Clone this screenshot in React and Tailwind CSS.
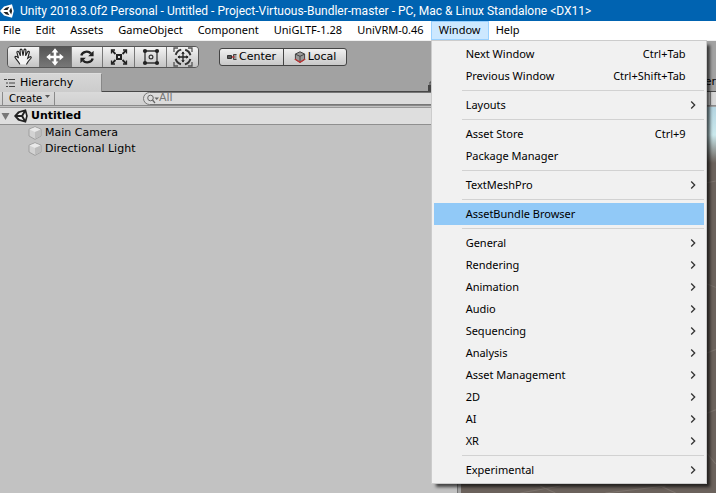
import React from "react";

const MENU_GROUPS = [
  [
    { label: "Next Window", keys: "Ctrl+Tab" },
    { label: "Previous Window", keys: "Ctrl+Shift+Tab" },
  ],
  [{ label: "Layouts", sub: true }],
  [{ label: "Asset Store", keys: "Ctrl+9" }, { label: "Package Manager" }],
  [{ label: "TextMeshPro", sub: true }],
  [{ label: "AssetBundle Browser", active: true }],
  [
    { label: "General", sub: true },
    { label: "Rendering", sub: true },
    { label: "Animation", sub: true },
    { label: "Audio", sub: true },
    { label: "Sequencing", sub: true },
    { label: "Analysis", sub: true },
    { label: "Asset Management", sub: true },
    { label: "2D", sub: true },
    { label: "AI", sub: true },
    { label: "XR", sub: true },
  ],
  [{ label: "Experimental", sub: true }],
];

function UnityLogo({ className, fill, edge }) {
  return (
    <svg className={className} viewBox="0 0 14 14" aria-hidden="true">
      <path d="M0 7 4 2.5 12 .2 13.8 7 12 13.8 4 11.500Z" fill={fill} />
      <path
        d="M3.4 6 5.8 3.700 9.4 2.700 7.500 6ZM3.4 8H7.500L9.4 11.300 5.800 10.300ZM9.2 7 11.2 3.600 12.1 7 11.2 10.400Z"
        fill={edge}
      />
    </svg>
  );
}

function HandIcon() {
  return (
    <svg className="h-[18px] w-[18px]" viewBox="0 0 16 16" aria-hidden="true">
      <path
        d="M5.2 14.5C4.6 12.4 1.3 9.6.8 8.1c.6-1.2 1.9-.6 3.2 1L2.6 4c-.1-1.3 1.3-1.5 1.700-.3L5.7 7 5.400 2c.1-1.3 1.6-1.300 1.800 0L8 6.7 8.900 1.800c.3-1.2 1.700-1 1.700.2L10.300 7l1.700-3.500c.6-1 1.900-.5 1.600.6L12.2 9.200 13.900 7.900c1-.5 1.800.3 1.100 1.200L12.6 12l-1.600 2.700"
        fill="#f5f5f5"
        stroke="#222"
        strokeWidth="1"
      />
    </svg>
  );
}

function MoveIcon() {
  return (
    <svg className="h-[18px] w-[18px]" viewBox="0 0 18 18" aria-hidden="true">
      <path
        d="M9 .3 12.4 4.4H10.3V7.7H13.6V5.6L17.7 9 13.6 12.4V10.3H10.3V13.6H12.4L9 17.7 5.6 13.6H7.7V10.3H4.4V12.4L.3 9 4.4 5.6V7.7H7.7V4.4H5.6Z"
        fill="#fff"
      />
    </svg>
  );
}

function RotateIcon() {
  return (
    <svg className="h-4 w-4" viewBox="0 0 16 16" aria-hidden="true">
      <path d="M2.3 6.5C3.4 2.4 9.2 1.3 12 4.6M13.7 9.5C12.6 13.6 6.8 14.7 4 11.4" fill="none" stroke="#222" strokeWidth="2.3" />
      <path d="M14.6 1.8V7.2H9.2ZM1.4 14.2V8.8H6.8Z" fill="#222" />
    </svg>
  );
}

function ScaleIcon() {
  return (
    <svg className="h-[18px] w-[18px]" viewBox="0 0 18 18" aria-hidden="true">
      <path d="M7 7h4v4H7z" fill="none" stroke="#222" strokeWidth="2" />
      <path d="M2 2.500l3.500 3.500M16 2.500l-3.500 3.500M2 15.500l3.500-3.500M16 15.500l-3.500-3.500" stroke="#222" strokeWidth="1.800" />
      <path d="M1.500 5.500V2H5M13 2h3.500v3.500M1.500 12.500V16H5M13 16h3.500v-3.500" fill="none" stroke="#222" strokeWidth="1.300" />
    </svg>
  );
}

function RectIcon() {
  return (
    <svg className="h-[18px] w-[18px]" viewBox="0 0 18 18" aria-hidden="true">
      <path d="M3 3h12v12H3z" fill="none" stroke="#333" strokeWidth="1.3" />
      <g fill="#222">
        <circle cx="3" cy="3" r="2.1" />
        <circle cx="15" cy="3" r="2.1" />
        <circle cx="3" cy="15" r="2.1" />
        <circle cx="15" cy="15" r="2.1" />
      </g>
      <circle cx="9" cy="9" r="1.9" fill="none" stroke="#333" strokeWidth="1.2" />
    </svg>
  );
}

function TransformIcon() {
  return (
    <svg className="h-5 w-5" viewBox="0 0 20 20" aria-hidden="true">
      <circle cx="10" cy="10" r="7.6" fill="none" stroke="#333" strokeWidth="2" strokeDasharray="7.9 4.04" strokeDashoffset="-2" />
      <path d="M1 5V1H5M15 1h4V5M1 15v4H5M15 19h4V15" fill="none" stroke="#555" strokeWidth="1.3" />
      <path d="M10 5v10M5 10h10" stroke="#222" strokeWidth="1.3" />
      <path d="M10 4.500 11.800 6.800H8.200ZM10 15.500 11.800 13.200H8.200ZM4.500 10 6.800 8.200v3.600ZM15.500 10 13.200 8.200v3.600Z" fill="#222" />
    </svg>
  );
}

function PivotIcon() {
  return (
    <svg className="h-2 w-2.5 shrink-0" viewBox="0 0 10 8" aria-hidden="true">
      <path d="M.5 2.500H4.500v3H.5z" fill="#555" stroke="#333" />
      <path d="M9.500 1.500H6.500v5H9.500" fill="#999" stroke="#444" />
      <path d="M5 4H7.500" stroke="#b33" strokeWidth="1.5" />
    </svg>
  );
}

function LocalIcon() {
  return (
    <svg className="h-3 w-3 shrink-0" viewBox="0 0 12 12" aria-hidden="true">
      <path d="M6 .8 10.6 3v5.5L6 11.2 1.4 8.5V3Z" fill="#999" stroke="#444" />
      <path d="M1.5 3.2 6 5.3 10.5 3.2M6 5.3V10" fill="none" stroke="#444" />
      <path d="M.8 8 6 11.3 11.2 8" fill="none" stroke="#b33" strokeWidth="1.4" />
    </svg>
  );
}

function CubeIcon() {
  return (
    <svg className="h-[14px] w-[14px] shrink-0" viewBox="0 0 14 14" aria-hidden="true">
      <path d="M7 .7 13 3.2V10L7 13.4 1 10V3.2Z" fill="#d2d2d2" stroke="#969696" strokeWidth=".8" />
      <path d="M1.4 3.5 7 5.9 12.6 3.5 7 1.2Z" fill="#e9e9e9" />
      <path d="M7 6V13L12.6 9.8V3.7Z" fill="#bcbcbc" />
    </svg>
  );
}

const TOOLS = [
  { name: "Hand", Icon: HandIcon },
  { name: "Move", Icon: MoveIcon, on: true },
  { name: "Rotate", Icon: RotateIcon },
  { name: "Scale", Icon: ScaleIcon },
  { name: "Rect", Icon: RectIcon },
  { name: "Transform", Icon: TransformIcon },
];

function WindowMenu() {
  return (
    <div
      role="menu"
      className="absolute -left-px top-[18px] z-10 w-[276px] border border-[#ccc] bg-[#f1f1f1] p-0.5 shadow-[4px_4px_3px_-1px_rgba(0,0,0,0.65)]"
    >
      {MENU_GROUPS.map((group, g) => (
        <div key={g} role="group">
          {g > 0 && <hr className="my-[3px] ml-7 border-[#d2d2d2]" />}
          {group.map((item) => (
            <button
              key={item.label}
              role="menuitem"
              className={
                "flex h-[22px] w-full items-center justify-between pl-8 text-left " +
                (item.active ? "bg-[#91c9f7]" : "")
              }
            >
              <span>{item.label}</span>
              {item.keys && <span className="pr-[18px]">{item.keys}</span>}
              {item.sub && (
                <svg className="mr-2 h-2 w-[6px]" viewBox="0 0 6 8" aria-hidden="true">
                  <path d="M1.2.5 4.7 4 1.2 7.5" fill="none" stroke="#333" strokeWidth="1.3" />
                </svg>
              )}
            </button>
          ))}
        </div>
      ))}
    </div>
  );
}

function MenuBar() {
  return (
    <nav className="flex h-5 shrink-0 items-stretch gap-[15px] whitespace-nowrap border-b border-[#f0f0f0] bg-white pl-[3px] font-['Noto_Sans',sans-serif] text-[11px] text-black">
      {["File", "Edit", "Assets", "GameObject", "Component", "UniGLTF-1.28", "UniVRM-0.46"].map((m) => (
        <button key={m}>{m}</button>
      ))}
      <div className="relative -mx-2 w-[58px] shrink-0 border border-[#99d1ff] bg-[#cce8ff]">
        <button className="h-full w-full" aria-haspopup="menu" aria-expanded="true">
          Window
        </button>
        <WindowMenu />
      </div>
      <button>Help</button>
    </nav>
  );
}

function Toolbar() {
  return (
    <div className="flex h-8 shrink-0 items-center bg-[#a2a2a2] pl-[7px]">
      <div className="flex h-[22px] w-48 overflow-hidden rounded border border-[#555]">
        {TOOLS.map(({ name, Icon, on }) => (
          <button
            key={name}
            aria-label={name}
            className={
              "flex flex-1 items-center justify-center border-r border-[#777] last:border-r-0 " +
              (on ? "bg-linear-to-b from-[#555] to-[#777]" : "bg-linear-to-b from-[#f4f4f4] to-[#c4c4c4]")
            }
          >
            <Icon />
          </button>
        ))}
      </div>
      <div className="ml-5 flex h-[18px] w-32 overflow-hidden rounded-[3px] border border-[#444] bg-linear-to-b from-[#f0f0f0] to-[#c8c8c8]">
        <button className="flex w-16 items-center justify-center gap-0.5 border-r border-[#444]">
          <PivotIcon />
          Center
        </button>
        <button className="flex flex-1 items-center justify-center gap-0.5">
          <LocalIcon />
          Local
        </button>
      </div>
    </div>
  );
}

function Hierarchy() {
  return (
    <section className="flex w-[64%] shrink-0 flex-col border-r border-[#777] bg-[#c2c2c2]">
      <div className="flex h-[19px] shrink-0 items-stretch justify-between border-b border-[#484848] bg-[#a2a2a2]">
        <h2 className="-mb-px flex w-[102px] items-center gap-1 border-r border-t border-r-[#888] border-t-[#ddd] bg-linear-to-b from-[#d6d6d6] to-[#ccc] pl-1">
          <svg className="h-2.5 w-3" viewBox="0 0 12 10" aria-hidden="true">
            <path d="M0 1.5h3M4 1.5h7M2 5h2M5 5h6M2 8.500h2M5 8.500h6" stroke="#444" strokeWidth="1.2" />
          </svg>
          Hierarchy
        </h2>
        <svg className="mr-5 mt-2 h-2.5 w-2.5" viewBox="0 0 10 10" aria-hidden="true">
          <path d="M1 4h8v6H1z" fill="#444" />
          <path d="M3 4V1h4v3" fill="none" stroke="#444" />
        </svg>
      </div>
      <div className="flex h-[14px] shrink-0 items-center border-b border-[#8a8a8a] bg-linear-to-b from-[#dadada] to-[#d0d0d0] pl-0.5">
        <button className="flex h-full w-[53px] items-center justify-between border-x border-[#8a8a8a] pl-1.5 pr-1 text-[10px]">
          Create
          <svg className="mb-1 h-[3px] w-[5px]" viewBox="0 0 5 3" aria-hidden="true">
            <path d="M0 0h5L2.500 3Z" fill="#555" />
          </svg>
        </button>
        <label className="ml-[88px] flex h-[13px] flex-1 items-center rounded-full border border-[#777] bg-[#dcdcdc] pl-[3px]">
          <svg className="h-2.5 w-3" viewBox="0 0 12 10" aria-hidden="true">
            <circle cx="3.500" cy="4" r="2.800" fill="none" stroke="#666" />
            <path d="M5.500 6 8 9" stroke="#666" strokeWidth="1.2" />
            <path d="M7.500 3.500H12L9.700 6Z" fill="#666" />
          </svg>
          <input aria-label="Search" defaultValue="All" className="h-3 min-w-0 flex-1 bg-transparent text-[#777] outline-none" />
        </label>
      </div>
      <div className="mt-px flex h-[18px] shrink-0 items-center border-y border-t-[#999] border-b-[#8f8f8f] bg-[#dedede] font-bold">
        <svg className="ml-px h-[9px] w-[9px]" viewBox="0 0 9 9" aria-hidden="true">
          <path d="M.5 1h8L4.500 8Z" fill="#777" />
        </svg>
        <UnityLogo className="ml-1 mr-[3px] h-[14px] w-[14px]" fill="#222" edge="#eee" />
        Untitled
      </div>
      <ul>
        {["Main Camera", "Directional Light"].map((name) => (
          <li key={name} className="flex h-4 items-center gap-[3px] pl-7">
            <CubeIcon />
            {name}
          </li>
        ))}
      </ul>
    </section>
  );
}

function SceneView() {
  return (
    <section className="ml-[3px] flex min-w-0 flex-1 flex-col">
      <div className="flex h-[19px] shrink-0 items-center justify-end border-b border-[#484848] bg-[#a2a2a2]">
        er
      </div>
      <div className="flex h-[14px] shrink-0 items-center justify-end gap-[3px] border-b border-[#8a8a8a] bg-[#d6d6d6]">
        <svg className="h-[3px] w-[5px]" viewBox="0 0 5 3" aria-hidden="true">
          <path d="M0 0h5L2.500 3Z" fill="#444" />
        </svg>
        <span className="h-full w-1.5 border-l border-[#888]" />
      </div>
      <div className="mt-px h-14 shrink-0 bg-linear-to-b from-[#b4d4e0] via-[#cbe9ed] to-[#6b625c]" />
      <svg className="min-h-0 w-full flex-1 bg-[#6b625c]" viewBox="0 0 255 329" preserveAspectRatio="xMaxYMax slice" aria-hidden="true">
        <path
          d="M60 329 100 322 M80 322 95 329M145 329 205 322M200 322 215 329M245 20 255 18M245 120 255 124M245 190 255 186M245 250 255 246M245 288 255 300"
          stroke="#7d746e"
          fill="none"
        />
      </svg>
    </section>
  );
}

export default function App() {
  return (
    <div className="flex h-screen flex-col overflow-hidden bg-[#a2a2a2] font-['DejaVu_Sans',sans-serif] text-[11px] text-black">
      <header className="flex h-[21px] shrink-0 items-center gap-1.5 whitespace-nowrap bg-[#0063b1] font-['Roboto',sans-serif] text-xs text-white">
        <UnityLogo className="h-[14px] w-[14px]" fill="#fff" edge="#222" />
        <h1>Unity 2018.3.0f2 Personal - Untitled - Project-Virtuous-Bundler-master - PC, Mac &amp; Linux Standalone &lt;DX11&gt;</h1>
      </header>
      <MenuBar />
      <Toolbar />
      <main className="flex min-h-0 flex-1">
        <Hierarchy />
        <SceneView />
      </main>
    </div>
  );
}
